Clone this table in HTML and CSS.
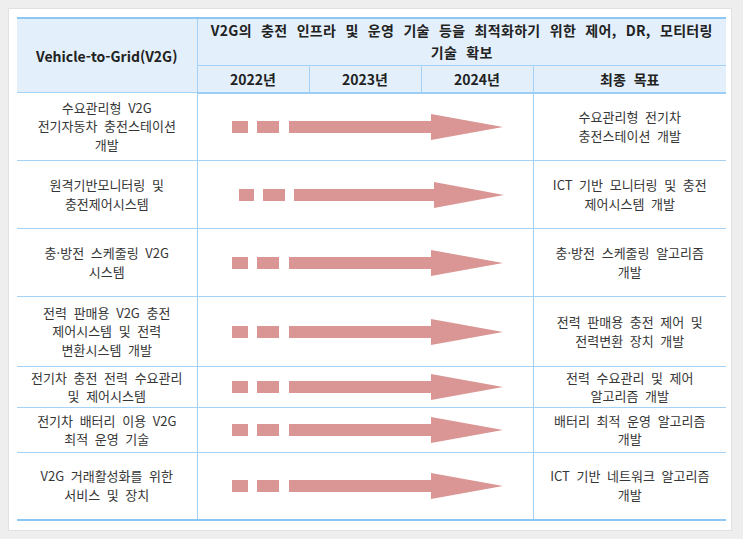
FILE: index.html
```html
<!DOCTYPE html>
<html lang="ko">
<head>
<meta charset="utf-8">
<link rel="stylesheet" href="styles.css">
</head>
<body>
<div class="panel">
<table class="plan">
  <colgroup>
    <col class="c-topic"><col class="c-year"><col class="c-year"><col class="c-year"><col class="c-goal">
  </colgroup>
  <thead>
    <tr class="h-title">
      <th rowspan="2" class="topic-head">Vehicle-to-Grid(V2G)</th>
      <th colspan="4" class="title">V2G의 충전 인프라 및 운영 기술 등을 최적화하기 위한 제어, DR, 모티터링<br>기술 확보</th>
    </tr>
    <tr class="h-years">
      <th class="year">2022년</th>
      <th class="year">2023년</th>
      <th class="year">2024년</th>
      <th class="goal-head">최종 목표</th>
    </tr>
  </thead>
  <tbody>
    <tr class="r68">
      <td class="topic">수요관리형 V2G<br>전기자동차 충전스테이션<br>개발</td>
      <td colspan="3" class="span"><svg class="arrow" viewBox="0 0 336 26" width="336" height="26"><rect x="34" y="7" width="16" height="12"/><rect x="59" y="7" width="22" height="12"/><polygon points="91,7 233,7 233,0 305,13 233,26 233,19 91,19"/></svg></td>
      <td class="goal">수요관리형 전기차<br>충전스테이션 개발</td>
    </tr>
    <tr class="r68">
      <td class="topic">원격기반모니터링 및<br>충전제어시스템</td>
      <td colspan="3" class="span"><svg class="arrow" viewBox="0 0 336 26" width="336" height="26"><rect x="41" y="7" width="15" height="12"/><rect x="65" y="7" width="22" height="12"/><polygon points="96,7 236,7 236,0 306,13 236,26 236,19 96,19"/></svg></td>
      <td class="goal">ICT 기반 모니터링 및 충전<br>제어시스템 개발</td>
    </tr>
    <tr class="r68">
      <td class="topic">충·방전 스케줄링 V2G<br>시스템</td>
      <td colspan="3" class="span"><svg class="arrow" viewBox="0 0 336 26" width="336" height="26"><rect x="34" y="7" width="16" height="12"/><rect x="59" y="7" width="22" height="12"/><polygon points="91,7 233,7 233,0 305,13 233,26 233,19 91,19"/></svg></td>
      <td class="goal">충·방전 스케줄링 알고리즘<br>개발</td>
    </tr>
    <tr class="r70">
      <td class="topic">전력 판매용 V2G 충전<br>제어시스템 및 전력<br>변환시스템 개발</td>
      <td colspan="3" class="span"><svg class="arrow" viewBox="0 0 336 26" width="336" height="26"><rect x="34" y="7" width="16" height="12"/><rect x="59" y="7" width="22" height="12"/><polygon points="91,7 233,7 233,0 305,13 233,26 233,19 91,19"/></svg></td>
      <td class="goal">전력 판매용 충전 제어 및<br>전력변환 장치 개발</td>
    </tr>
    <tr class="r41">
      <td class="topic">전기차 충전 전력 수요관리<br>및 제어시스템</td>
      <td colspan="3" class="span"><svg class="arrow" viewBox="0 0 336 26" width="336" height="26"><rect x="34" y="7" width="16" height="12"/><rect x="59" y="7" width="22" height="12"/><polygon points="91,7 233,7 233,0 305,13 233,26 233,19 91,19"/></svg></td>
      <td class="goal">전력 수요관리 및 제어<br>알고리즘 개발</td>
    </tr>
    <tr class="r45">
      <td class="topic">전기차 배터리 이용 V2G<br>최적 운영 기술</td>
      <td colspan="3" class="span"><svg class="arrow" viewBox="0 0 336 26" width="336" height="26"><rect x="34" y="7" width="16" height="12"/><rect x="59" y="7" width="22" height="12"/><polygon points="91,7 233,7 233,0 305,13 233,26 233,19 91,19"/></svg></td>
      <td class="goal">배터리 최적 운영 알고리즘<br>개발</td>
    </tr>
    <tr class="r67">
      <td class="topic">V2G 거래활성화를 위한<br>서비스 및 장치</td>
      <td colspan="3" class="span"><svg class="arrow" viewBox="0 0 336 26" width="336" height="26"><rect x="34" y="7" width="16" height="12"/><rect x="59" y="7" width="22" height="12"/><polygon points="91,7 233,7 233,0 305,13 233,26 233,19 91,19"/></svg></td>
      <td class="goal">ICT 기반 네트워크 알고리즘<br>개발</td>
    </tr>
  </tbody>
</table>
</div>
</body>
</html>
```

FILE: styles.css
```css
html, body {
  margin: 0;
  padding: 0;
}
body {
  background: #eeeeee;
  font-family: "Noto Sans CJK KR", "Noto Sans", sans-serif;
  color: #333;
}
.panel {
  margin: 8px 11px 0 8px;
  background: #fff;
  border: 1px solid #e1e1e1;
  padding: 8px 5px 9px 8px;
  width: 709px;
}
.plan {
  width: 709px;
  border-collapse: collapse;
  table-layout: fixed;
  border-top: 2px solid #8cc6f2;
  border-bottom: 2px solid #8cc6f2;
}
.c-topic { width: 180px; }
.c-year { width: 112px; }
.c-goal { width: 193px; }
.plan th, .plan td {
  padding: 0;
  text-align: center;
  vertical-align: middle;
  border: 1px solid #a4d2f6;
}
.plan tr > :first-child { border-left: none; }
.plan tr > :last-child { border-right: none; }
.plan th {
  background: #e3f0fb;
  color: #222;
  font-weight: bold;
  font-size: 14px;
  word-spacing: 4px;
}
.h-title { height: 47px; }
.h-title .title {
  line-height: 22px;
  letter-spacing: 0.3px;
  word-spacing: 5px;
  padding-bottom: 2px;
}
.h-years { height: 27px; }
.h-years th { border-bottom: 2px solid #9ccdf4; }
.topic-head { border-bottom: 2px solid #9ccdf4; padding-top: 6px; }
.plan td {
  font-size: 13px;
  line-height: 18.5px;
  word-spacing: 3px;
  color: #363636;
}
.r68 { height: 68px; }
.r70 { height: 70px; }
.r41 { height: 41px; }
.r45 { height: 45px; }
.r67 { height: 67px; }
.span { text-align: left; }
.arrow {
  display: block;
  fill: #d99694;
}
```
